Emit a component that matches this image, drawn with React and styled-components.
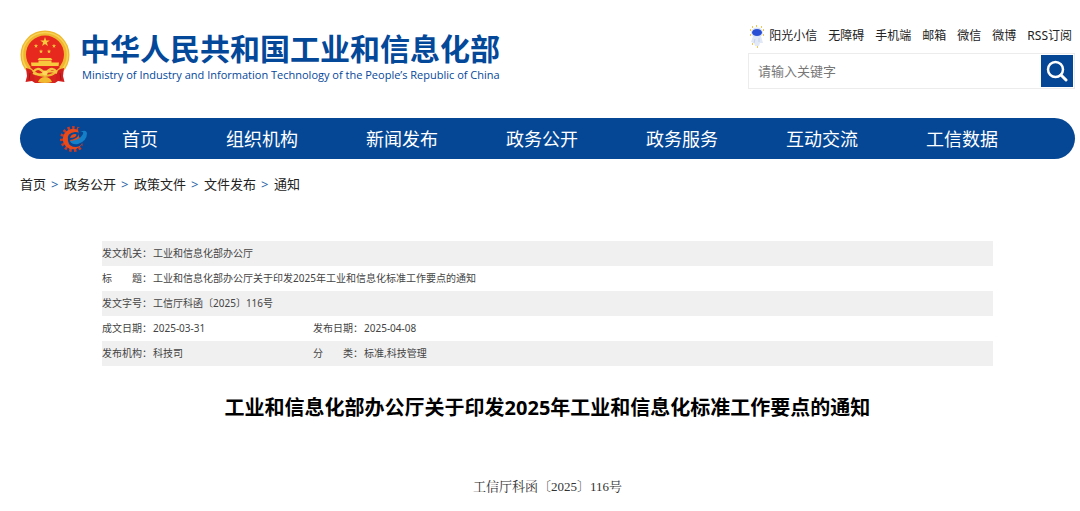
import { Fragment, useState } from 'react';
import styled, { createGlobalStyle } from 'styled-components';

const topLinks = ['无障碍', '手机端', '邮箱', '微信', '微博', 'RSS订阅'];

const navItems = [
  '首页',
  '组织机构',
  '新闻发布',
  '政务公开',
  '政务服务',
  '互动交流',
  '工信数据',
];

const crumbs = ['首页', '政务公开', '政策文件', '文件发布', '通知'];

const metaRows = [
  [['发文机关：', '工业和信息化部办公厅']],
  [['标　　题：', '工业和信息化部办公厅关于印发2025年工业和信息化标准工作要点的通知']],
  [['发文字号：', '工信厅科函〔2025〕116号']],
  [
    ['成文日期：', '2025-03-31'],
    ['发布日期：', '2025-04-08'],
  ],
  [
    ['发布机构：', '科技司'],
    ['分　　类：', '标准,科技管理'],
  ],
];

const STAR = 'M0-5 1.2-1.6 4.8-1.5 1.9.6 2.9 4 0 2-2.9 4-1.9.6-4.8-1.5-1.2-1.6Z';

const Emblem = () => (
  <svg width='50' height='54' viewBox='0 0 50 54' aria-hidden='true'>
    <circle cx='25' cy='25' r='24.500' fill='#efb72e' />
    <circle cx='25' cy='25' r='22.500' fill='none' stroke='#f8d255' strokeWidth='1.500' />
    <circle cx='25' cy='24.500' r='19' fill='#e6281f' />
    <path d='M10 37H40Q34 44 25 45 16 44 10 37Z' fill='#de261f' />
    <g fill='#f8c93c'>
      <path d={STAR} transform='translate(25 12)' />
      <path d={STAR} transform='translate(16 16) scale(.45)' />
      <path d={STAR} transform='translate(34 16) scale(.45)' />
      <path d={STAR} transform='translate(21 21.500) scale(.45)' />
      <path d={STAR} transform='translate(29 21.500) scale(.45)' />
      <path d='M19 28H31L32.500 30H17.500ZM18.500 30.500H31.500V32.500H39L38.500 36H11.500L11 32.500H18.500Z' />
    </g>
    <path d='M6 38Q12 39 14 43L18 47 15 53 12 51 5.500 52 7 46Z' fill='#d3201f' />
    <path d='M44 38Q38 39 36 43L32 47 35 53 38 51 44.500 52 43 46Z' fill='#d3201f' />
    <path d='M14 44Q25 50 36 44L35 53H15Z' fill='#d8261f' />
    <path
      d='M13 42Q17 37 21 40L25 43 29 40Q33 37 37 42M13 43Q19 46 25 43T37 43'
      fill='none'
      stroke='#f5c440'
      strokeWidth='2.200'
    />
    <circle cx='25' cy='43' r='2.500' fill='#fbd75c' />
    <path d='M18 52Q20 47 25 47T32 52Q25 54 18 52Z' fill='#f0b92f' />
    <path d='M10 43 9 50M40 43 41 50' stroke='#a91318' />
  </svg>
);

const Mascot = () => (
  <svg width='16' height='24' viewBox='0 0 16 24' aria-hidden='true'>
    <path
      d='M7 2h1M3 3h1M12 3h1M1 6h1M14 6h1M1 11h1M14 11h1M3 20h1M8 23h1'
      stroke='#f5c64a'
      strokeWidth='2'
    />
    <path d='M4 12Q8 10 12 12L14 19 11 19 10 22H6L5 19 2 18Z' fill='#e2e9f6' />
    <ellipse cx='8' cy='8.500' rx='6' ry='5' fill='#d9e3fa' />
    <ellipse cx='8' cy='8.500' rx='5' ry='3.500' fill='#2b4fd3' />
    <path d='M6 15 5 19M10 14 10 18' stroke='#c5d0ea' />
  </svg>
);

const GearLogo = () => (
  <svg width='28' height='28' viewBox='0 0 28 28' aria-hidden='true'>
    <circle
      cx='13'
      cy='14'
      r='11.500'
      fill='none'
      stroke='#d2381f'
      strokeWidth='3'
      strokeDasharray='2.500 2.320'
    />
    <circle cx='13' cy='14' r='10.300' fill='#e84a1a' />
    <path d='M18 3 28 3 28 20 22 23Q24 17 19 12Z' fill='#054795' />
    <path d='M8 16Q6 8 15 7 21 7 18 11 16 14 10 15 12 20 19 18L23 15Q22 22 16 22 9 22 8 16Z' fill='#054795' />
    <path d='M10 13Q11 9 15 9 18 9 15 12 13 13 10 13Z' fill='#e84a1a' />
    <path
      d='M10 16Q20 15 23 9 24 6 20 7 26 4 27 8 27 16 18 19 12 20 10 16Z'
      fill='#1480c8'
    />
  </svg>
);

const SearchIcon = () => (
  <svg width='22' height='22' viewBox='0 0 22 22' aria-hidden='true'>
    <circle cx='9.500' cy='9.500' r='7.500' fill='none' stroke='#fff' strokeWidth='2.500' />
    <path d='M15 15 20 20' stroke='#fff' strokeWidth='3' strokeLinecap='round' />
  </svg>
);

const App = () => {
  const [keyword, setKeyword] = useState('');

  return (
    <Page>
      <GlobalStyle />
      <Header>
        <Brand href='#'>
          <Emblem />
          <BrandText>
            <BrandName>中华人民共和国工业和信息化部</BrandName>
            <BrandEnglish>
              Ministry of Industry and Information Technology of the People’s Republic of China
            </BrandEnglish>
          </BrandText>
        </Brand>
        <Tools>
          <TopLinks>
            <TopLink href='#'>
              <Mascot />
              阳光小信
            </TopLink>
            {topLinks.map((label) => (
              <TopLink key={label} href='#'>
                {label}
              </TopLink>
            ))}
          </TopLinks>
          <SearchForm onSubmit={(e) => e.preventDefault()}>
            <SearchInput
              type='text'
              aria-label='请输入关键字'
              placeholder='请输入关键字'
              value={keyword}
              onChange={(e) => setKeyword(e.target.value)}
            />
            <SearchButton type='submit' aria-label='搜索'>
              <SearchIcon />
            </SearchButton>
          </SearchForm>
        </Tools>
      </Header>

      <Nav>
        <GearLogo />
        <NavList>
          {navItems.map((item) => (
            <NavLink key={item} href='#'>
              {item}
            </NavLink>
          ))}
        </NavList>
      </Nav>

      <Breadcrumb>
        {crumbs.map((crumb, i) => (
          <Fragment key={crumb}>
            {i > 0 && <Separator>&gt;</Separator>}
            <CrumbLink href='#'>{crumb}</CrumbLink>
          </Fragment>
        ))}
      </Breadcrumb>

      <Article>
        <MetaTable>
          <colgroup>
            <MetaCol $width='51px' />
            <MetaCol $width='160px' />
            <MetaCol $width='51px' />
            <MetaCol />
          </colgroup>
          <tbody>
            {metaRows.map((cells) => (
              <MetaRow key={cells[0][0]}>
                {cells.map(([label, value]) => (
                  <Fragment key={label}>
                    <th scope='row'>{label}</th>
                    <td colSpan={cells.length === 1 ? 3 : 1}>{value}</td>
                  </Fragment>
                ))}
              </MetaRow>
            ))}
          </tbody>
        </MetaTable>
        <Title>工业和信息化部办公厅关于印发2025年工业和信息化标准工作要点的通知</Title>
        <DocNumber>工信厅科函〔2025〕116号</DocNumber>
      </Article>
    </Page>
  );
};

const GlobalStyle = createGlobalStyle`
  * {
    box-sizing: border-box;
  }

  body {
    margin: 0;
    background: #fff;
    color: #222;
    font-family: 'Noto Sans', 'Noto Sans CJK SC', sans-serif;
  }

  a {
    color: inherit;
    text-decoration: none;
  }

  svg {
    display: block;
    flex-shrink: 0;
  }
`;

const Page = styled.div`
  padding: 24px 5px 16px 20px;
`;

const Header = styled.header`
  display: flex;
  justify-content: space-between;
  align-items: flex-start;
  gap: 24px;
`;

const Brand = styled.a`
  display: flex;
  gap: 10px;
  padding-top: 6px;
  color: #04489a;
`;

const BrandText = styled.div`
  display: flex;
  flex-direction: column;
  white-space: nowrap;
`;

const BrandName = styled.span`
  font-size: 30px;
  font-weight: 700;
  line-height: 38px;
`;

const BrandEnglish = styled.span`
  padding-left: 2px;
  font-family: 'Open Sans', 'Noto Sans', sans-serif;
  font-size: 11px;
  font-weight: 500;
  line-height: 14px;
`;

const Tools = styled.div`
  flex: 0 0 31%;
`;

const TopLinks = styled.div`
  display: flex;
  justify-content: flex-end;
  gap: 11px;
  padding-right: 3px;
`;

const TopLink = styled.a`
  display: flex;
  gap: 4px;
  font-size: 12px;
  line-height: 23px;
  white-space: nowrap;
`;

const SearchForm = styled.form`
  display: flex;
  margin-top: 5px;
  padding: 1px;
  border: 1px solid #ececec;
`;

const SearchInput = styled.input`
  flex: 1;
  min-width: 0;
  padding: 0 8px;
  border: none;
  outline: none;
  font-family: inherit;
  font-size: 13px;

  &::placeholder {
    color: #777;
    opacity: 1;
  }
`;

const SearchButton = styled.button`
  display: flex;
  align-items: center;
  justify-content: center;
  width: 32px;
  height: 32px;
  padding: 0;
  border: none;
  background: #054795;
  cursor: pointer;
`;

const Nav = styled.nav`
  display: flex;
  align-items: center;
  gap: 34px;
  height: 41px;
  margin-top: 29px;
  padding: 0 40px;
  border-radius: 21px;
  background: #054795;
`;

const NavList = styled.div`
  display: flex;
  gap: 68px;
`;

const NavLink = styled.a`
  color: #fff;
  font-size: 18px;
  line-height: 28px;
  white-space: nowrap;
`;

const Breadcrumb = styled.div`
  display: flex;
  gap: 5px;
  margin-top: 15px;
  font-size: 13px;
  line-height: 20px;
`;

const CrumbLink = styled.a`
  color: #222;
`;

const Separator = styled.span`
  width: 8px;
  color: #2a66a8;
`;

const Article = styled.main`
  margin-top: 47px;
  padding: 0 82px;
`;

const MetaTable = styled.table`
  width: 100%;
  table-layout: fixed;
  border-collapse: collapse;
  color: #444;
  font-size: 10px;
  line-height: 15px;
`;

const MetaCol = styled.col`
  width: ${(props) => props.$width || 'auto'};
`;

const MetaRow = styled.tr`
  height: 25px;

  &:nth-child(odd) {
    background: #f0f0f0;
  }

  th,
  td {
    padding: 0;
    font-weight: 400;
    text-align: left;
    white-space: nowrap;
  }
`;

const Title = styled.h1`
  margin: 27px 0 0;
  color: #000;
  font-size: 20px;
  line-height: 30px;
  text-align: center;
`;

const DocNumber = styled.p`
  margin: 54px 0 0;
  color: #333;
  font-family: 'Liberation Serif', 'Noto Serif CJK SC', 'Noto Sans CJK SC', serif;
  font-size: 13px;
  line-height: 20px;
  text-align: center;
`;

export default App;
